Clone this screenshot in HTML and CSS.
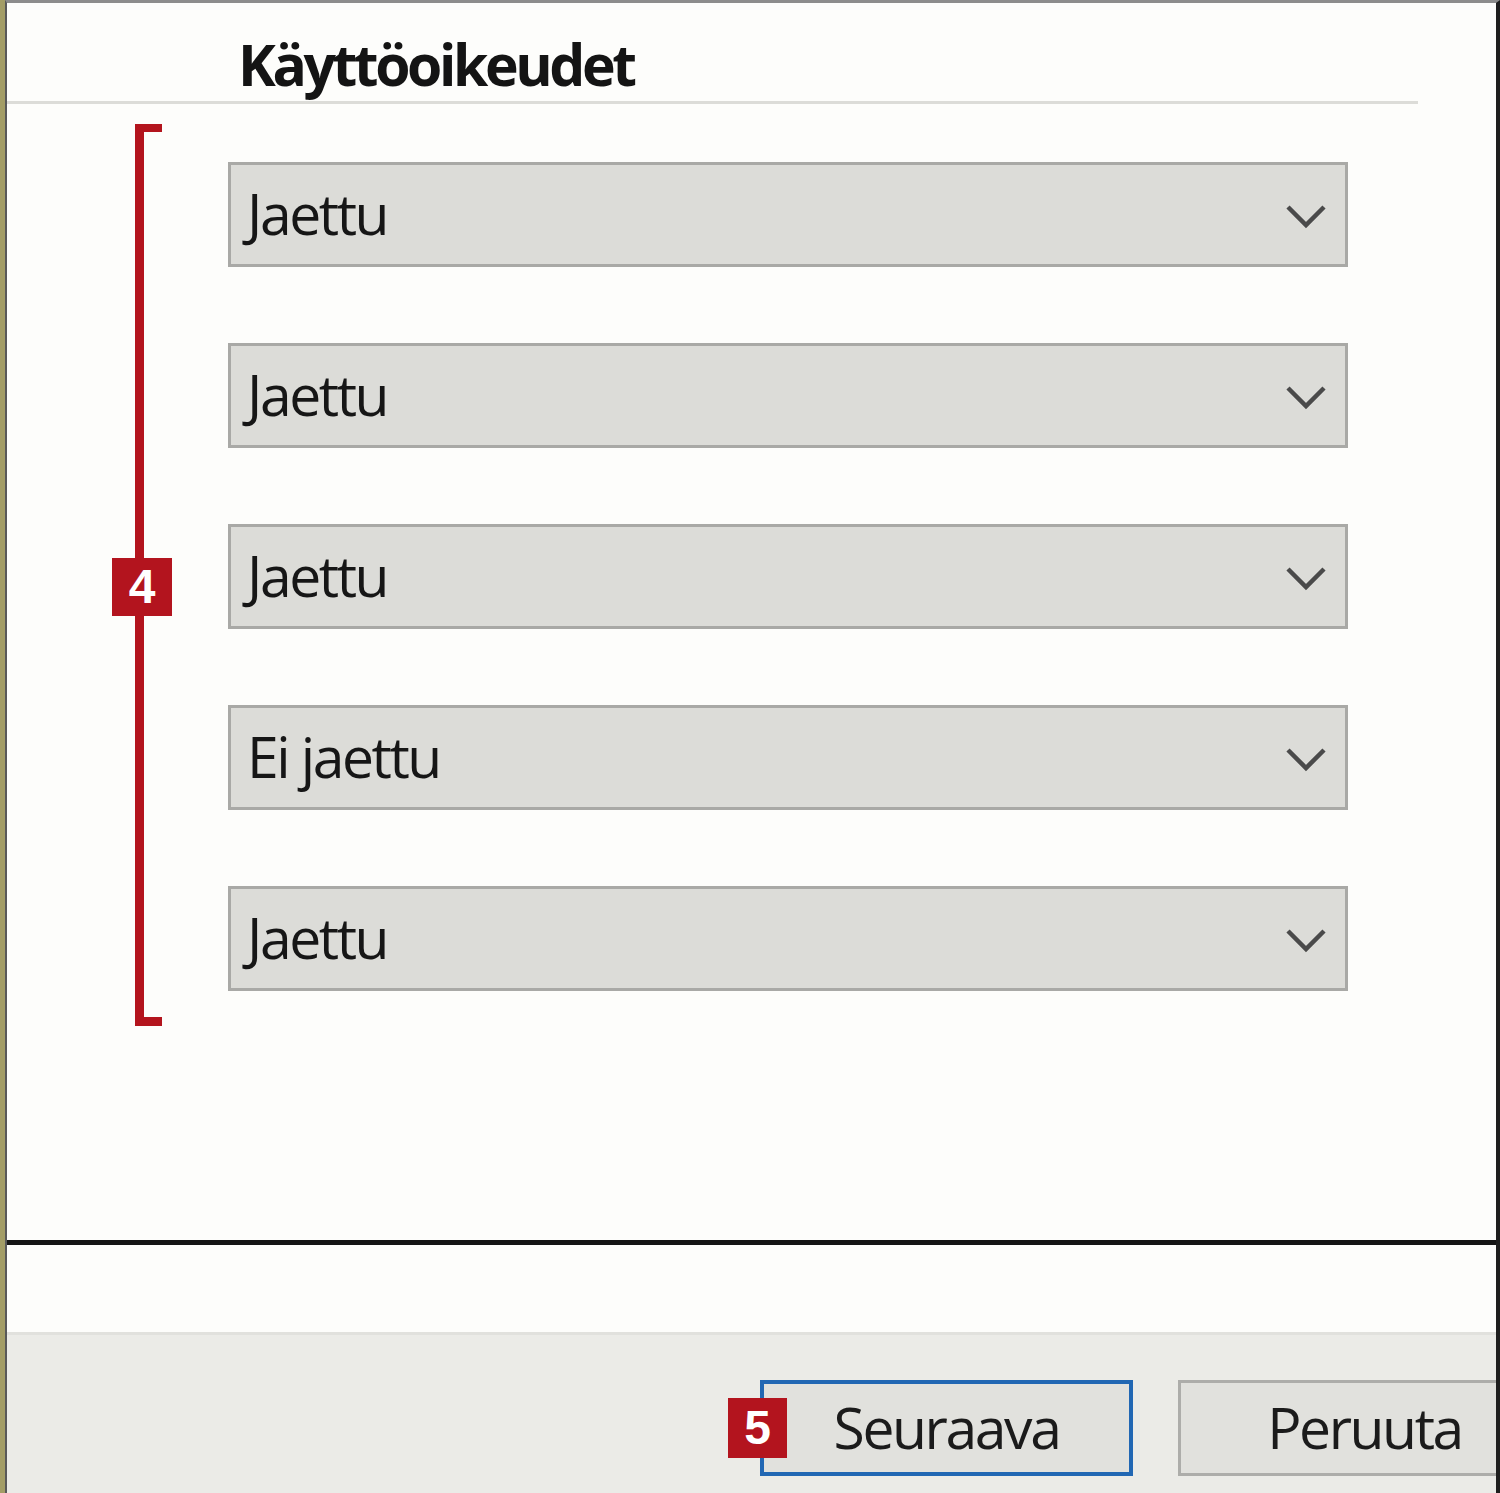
FILE: index.html
```html
<!DOCTYPE html>
<html lang="fi">
<head>
   <meta charset="UTF-8">
   <meta name="viewport" content="width=device-width, initial-scale=1.0">
   <title>Käyttöoikeudet</title>
   <link rel="stylesheet" href="styles.css">
</head>
<body>
   <div class="window">
       <div class="frame">
           <div class="content">
               <div class="header">
                   <h1>Käyttöoikeudet</h1>
               </div>

               <div class="group">
                   <div class="bracket">
                       <span class="badge badge-4">4</span>
                   </div>
                   <div class="selects">
                       <div class="select"><span>Jaettu</span><svg class="chevron" viewBox="0 0 42 26"><path d="M3 4 L21 22 L39 4"/></svg></div>
                       <div class="select"><span>Jaettu</span><svg class="chevron" viewBox="0 0 42 26"><path d="M3 4 L21 22 L39 4"/></svg></div>
                       <div class="select"><span>Jaettu</span><svg class="chevron" viewBox="0 0 42 26"><path d="M3 4 L21 22 L39 4"/></svg></div>
                       <div class="select"><span>Ei jaettu</span><svg class="chevron" viewBox="0 0 42 26"><path d="M3 4 L21 22 L39 4"/></svg></div>
                       <div class="select"><span>Jaettu</span><svg class="chevron" viewBox="0 0 42 26"><path d="M3 4 L21 22 L39 4"/></svg></div>
                   </div>
               </div>
           </div>

           <div class="spacer"></div>

           <div class="footer">
               <button class="btn btn-primary">
                   <span class="badge badge-5">5</span>
                   Seuraava
               </button>
               <button class="btn">Peruuta</button>
           </div>
       </div>
   </div>
</body>
</html>
```

FILE: styles.css
```css
html, body {
    margin: 0;
    padding: 0;
}

body {
    width: 1500px;
    height: 1493px;
    overflow: hidden;
    font-family: "Open Sans", "Noto Sans", sans-serif;
    color: #1b1b1b;
    background: #fdfdfb;
}

.window {
    height: 100%;
    border-left: 5px solid #a39d66;
    box-sizing: border-box;
}

.frame {
    height: 100%;
    box-sizing: border-box;
    border-left: 2px solid #595959;
    border-top: 3px solid #8c8c8c;
    border-right: 4px solid #1e1e1e;
    display: flex;
    flex-direction: column;
}

/* main panel */
.content {
    height: 1237px;
    background: #fdfdfb;
    border-bottom: 5px solid #151515;
    box-sizing: content-box;
}

.header {
    height: 101px;
    margin-right: 78px;
    border-bottom: 3px solid #dcdcd8;
    padding-left: 231px;
    box-sizing: border-box;
}

h1 {
    margin: 0;
    padding-top: 25px;
    font-size: 57px;
    font-weight: 700;
    line-height: 72px;
    letter-spacing: -3.4px;
    color: #141414;
}

.group {
    display: flex;
    margin-top: 20px;
}

.bracket {
    position: relative;
    margin-left: 128px;
    width: 18px;
    border: 0 solid #b3141d;
    border-left-width: 9px;
    border-top-width: 8px;
    border-bottom-width: 9px;
}

.selects {
    display: flex;
    flex-direction: column;
    gap: 76px;
    margin-left: 66px;
    padding-top: 38px;
    padding-bottom: 35px;
}

.select {
    width: 1120px;
    height: 105px;
    box-sizing: border-box;
    background: #dcdcd8;
    border: 3px solid #a9a9a6;
    display: flex;
    align-items: center;
    justify-content: space-between;
    padding: 0 18px 0 16px;
    font-size: 57px;
    letter-spacing: -2.4px;
    color: #161616;
}

.select span {
    margin-top: -4px;
}

.chevron {
    width: 42px;
    height: 26px;
    fill: none;
    stroke: #4a4a4a;
    stroke-width: 4.5;
    stroke-linejoin: miter;
    margin-top: 2px;
}

/* callout badges */
.badge {
    position: absolute;
    background: #b3141e;
    color: #fff;
    font-family: "Liberation Sans", Arial, sans-serif;
    font-weight: 700;
    font-size: 48px;
    line-height: 58px;
    text-align: center;
    width: 60px;
    height: 58px;
    letter-spacing: 0;
}

.badge-4 {
    top: 426px;
    left: -32px;
}

.badge-5 {
    top: 14px;
    left: -36px;
    width: 59px;
    height: 60px;
    line-height: 60px;
}

.spacer {
    height: 87px;
    background: #fdfdfb;
}

/* dialog buttons */
.footer {
    flex: 1;
    background: #ebebe7;
    border-top: 3px solid #e1e1dd;
    display: flex;
    gap: 45px;
    padding-left: 753px;
    padding-top: 45px;
    overflow: hidden;
}

.btn {
    position: relative;
    flex: none;
    width: 373px;
    height: 96px;
    box-sizing: border-box;
    background: #e1e1dd;
    border: 3px solid #adadaa;
    font-family: "Open Sans", "Noto Sans", sans-serif;
    font-size: 57px;
    letter-spacing: -2.4px;
    color: #1b1b1b;
    padding: 0 0 2px;
}

.btn-primary {
    border: 4px solid #2167b3;
}
```
